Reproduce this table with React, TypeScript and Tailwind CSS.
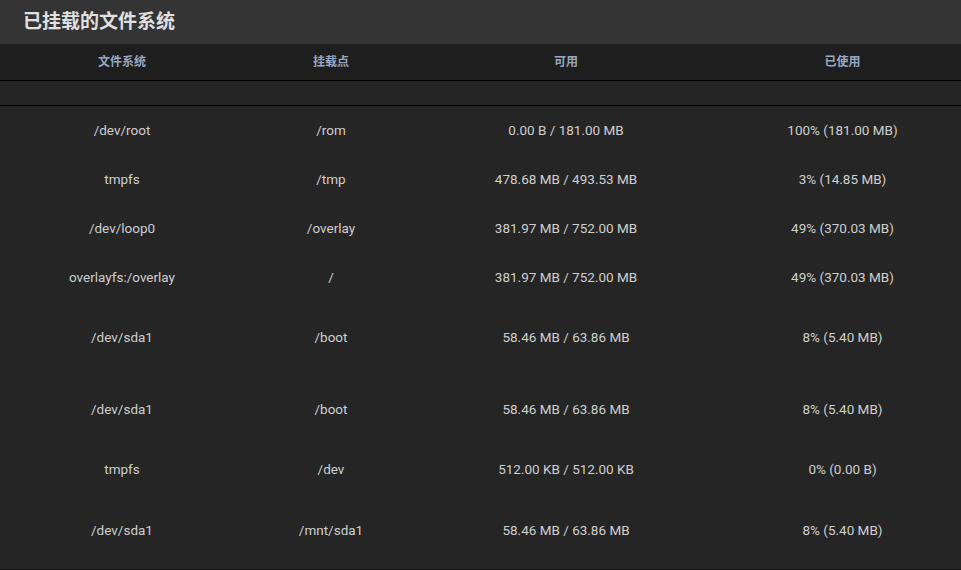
import React from "react";

const rows: { fs: string; mp: string; avail: string; used: string; h: string }[] = [
  { fs: "/dev/root", mp: "/rom", avail: "0.00 B / 181.00 MB", used: "100% (181.00 MB)", h: "h-[49px]" },
  { fs: "tmpfs", mp: "/tmp", avail: "478.68 MB / 493.53 MB", used: "3% (14.85 MB)", h: "h-[49px]" },
  { fs: "/dev/loop0", mp: "/overlay", avail: "381.97 MB / 752.00 MB", used: "49% (370.03 MB)", h: "h-[49px]" },
  { fs: "overlayfs:/overlay", mp: "/", avail: "381.97 MB / 752.00 MB", used: "49% (370.03 MB)", h: "h-[49px]" },
  { fs: "/dev/sda1", mp: "/boot", avail: "58.46 MB / 63.86 MB", used: "8% (5.40 MB)", h: "h-[71px]" },
  { fs: "/dev/sda1", mp: "/boot", avail: "58.46 MB / 63.86 MB", used: "8% (5.40 MB)", h: "h-[74px]" },
  { fs: "tmpfs", mp: "/dev", avail: "512.00 KB / 512.00 KB", used: "0% (0.00 B)", h: "h-[46px]" },
  { fs: "/dev/sda1", mp: "/mnt/sda1", avail: "58.46 MB / 63.86 MB", used: "8% (5.40 MB)", h: "h-[76px]" },
];

const grid = "grid grid-cols-[244px_174px_296px_1fr]";

export default function App() {
  return (
    <div className="w-[961px] h-[570px] bg-[#252525] overflow-hidden" style={{ fontFamily: "Roboto, 'Noto Sans', 'Noto Sans CJK SC', sans-serif" }}>
      <div className="h-[44px] bg-[#343434] flex items-center pl-[23px] pb-[5px]">
        <h1 className="text-[19px] font-bold text-[#e0e0e0] leading-none" style={{ fontFamily: "'Noto Sans CJK SC', sans-serif" }}>
          已挂载的文件系统
        </h1>
      </div>
      <div className={`${grid} h-[37px] bg-[#1e1e1e] border-b border-black items-center pb-[2px] text-[12px] font-bold text-[#98a8c0]`} style={{ fontFamily: "'Noto Sans CJK SC', sans-serif" }}>
        <div className="text-center">文件系统</div>
        <div className="text-center">挂载点</div>
        <div className="text-center">可用</div>
        <div className="text-center pl-[10px]">已使用</div>
      </div>
      <div className="h-[25px] border-b border-black bg-[#252525]" />
      <div className="border-b border-[#111]">
        {rows.map((r, i) => (
          <div key={i} className={`${grid} ${r.h} items-center pb-[1px] text-[13.5px] text-[#cfcfcf]`}>
            <div className="text-center">{r.fs}</div>
            <div className="text-center">{r.mp}</div>
            <div className="text-center">{r.avail}</div>
            <div className="text-center pl-[10px]">{r.used}</div>
          </div>
        ))}
      </div>
    </div>
  );
}
